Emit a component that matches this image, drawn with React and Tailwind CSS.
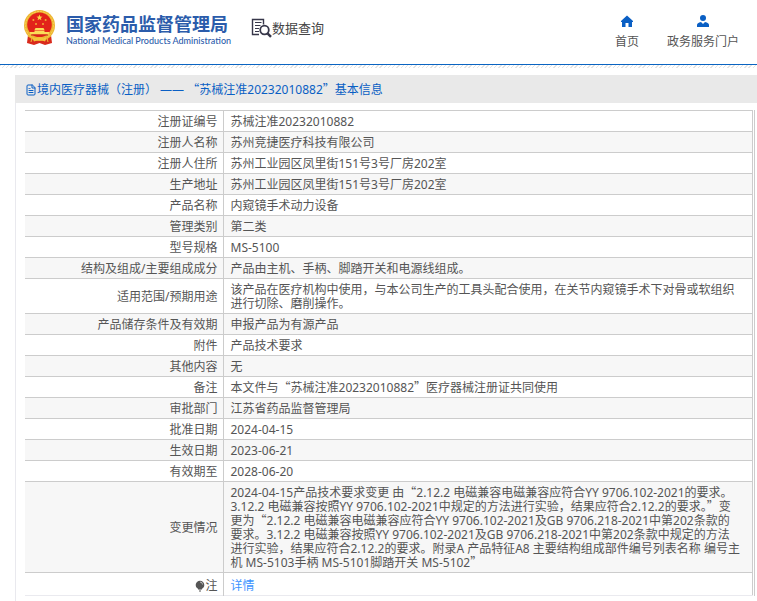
import { FiFileText } from "react-icons/fi";

const rows = [
  { label: "注册证编号", value: "苏械注准20232010882" },
  { label: "注册人名称", value: "苏州竞捷医疗科技有限公司" },
  { label: "注册人住所", value: "苏州工业园区凤里街151号3号厂房202室" },
  { label: "生产地址", value: "苏州工业园区凤里街151号3号厂房202室" },
  { label: "产品名称", value: "内窥镜手术动力设备" },
  { label: "管理类别", value: "第二类" },
  { label: "型号规格", value: "MS-5100" },
  { label: "结构及组成/主要组成成分", value: "产品由主机、手柄、脚踏开关和电源线组成。" },
  {
    label: "适用范围/预期用途",
    value:
      "该产品在医疗机构中使用，与本公司生产的工具头配合使用，在关节内窥镜手术下对骨或软组织\n进行切除、磨削操作。",
  },
  { label: "产品储存条件及有效期", value: "申报产品为有源产品" },
  { label: "附件", value: "产品技术要求" },
  { label: "其他内容", value: "无" },
  { label: "备注", value: "本文件与“苏械注准20232010882”医疗器械注册证共同使用" },
  { label: "审批部门", value: "江苏省药品监督管理局" },
  { label: "批准日期", value: "2024-04-15" },
  { label: "生效日期", value: "2023-06-21" },
  { label: "有效期至", value: "2028-06-20" },
  {
    label: "变更情况",
    value:
      "2024-04-15产品技术要求变更 由“2.12.2 电磁兼容电磁兼容应符合YY 9706.102-2021的要求。\n3.12.2 电磁兼容按照YY 9706.102-2021中规定的方法进行实验，结果应符合2.12.2的要求。”变\n更为“2.12.2 电磁兼容电磁兼容应符合YY 9706.102-2021及GB 9706.218-2021中第202条款的\n要求。3.12.2 电磁兼容按照YY 9706.102-2021及GB 9706.218-2021中第202条款中规定的方法\n进行实验，结果应符合2.12.2的要求。附录A 产品特征A8 主要结构组成部件编号列表名称 编号主\n机 MS-5103手柄 MS-5101脚踏开关 MS-5102”",
  },
];

// Curly quotes take the full-width glyph of the CJK face
function Zh({ children }) {
  return children.split(/([“”])/).map((part, i) =>
    part === "“" || part === "”" ? (
      <span key={i} className="font-['Noto_Sans_CJK_SC',sans-serif] leading-[10px]">
        {part}
      </span>
    ) : (
      part
    )
  );
}

function Emblem() {
  return (
    <svg viewBox="0 0 33 35" className="h-[35px] w-[33px]" aria-hidden="true">
      <path d="M5 25 L28 25 L29 33 L22 35 L16.5 33 L11 35 L4 33 Z" fill="#d92a1c" />
      <circle cx="16.5" cy="15.5" r="15.5" fill="#edb532" />
      <circle cx="16.5" cy="15.5" r="14" fill="none" stroke="#f8d458" strokeDasharray="2 1" />
      <circle cx="16.5" cy="14.8" r="12.3" fill="#e2231a" />
      <path d="M16.5 4.6 l.8 2 2.2.1 -1.7 1.4 .6 2.1 -1.9-1.2 -1.9 1.2 .6-2.1 -1.7-1.4 2.2-.1z" fill="#f9d648" />
      <g fill="#f2ab35">
        <circle cx="10.4" cy="10" r="1" />
        <circle cx="22.6" cy="10" r="1" />
        <circle cx="13" cy="14" r="1" />
        <circle cx="20" cy="14" r="1" />
      </g>
      <path d="M12.5 18 h8 l1 2 h-10z M11.5 20.5 h10 v1.5 h-10z M6.5 22 h20 l-1 2.6 h-18z" fill="#fbdc58" />
      <path d="M8 25 h17" stroke="#c9251b" />
      <path d="M10 29.5 q6.5-4.5 13 0 l-1 2 q-5.5-3-11 0z" fill="#f4c43b" />
      <path d="M5 26 l4 2 -1 4 M28 26 l-4 2 1 4" stroke="#f0b632" fill="none" />
    </svg>
  );
}

function SearchDocIcon() {
  return (
    <svg viewBox="0 0 21 20" className="h-5 w-[21px]" fill="none" stroke="#37374a" aria-hidden="true">
      <path d="M12.5 6.5V1.5H1.5V16.5H8" strokeWidth="1.4" />
      <path d="M4 4.5h6.5M4 7.5h5.5M4 10.5h4M4 13.5h4" strokeWidth="1" />
      <circle cx="13.5" cy="12" r="4.3" strokeWidth="1.8" />
      <path d="M16.5 15.3l3.5 3.5" strokeWidth="2.4" />
    </svg>
  );
}

function HomeIcon() {
  return (
    <svg viewBox="0 0 12 12" className="h-3 w-3" fill="#0a5fc4" aria-hidden="true">
      <path d="M6 0.5 L0 6 V7 H1 V12 H4.5 V8 H7.5 V12 H11 V7 H12 V6 Z" />
    </svg>
  );
}

function UserIcon() {
  return (
    <svg viewBox="0 0 12 12" className="h-3 w-3" fill="#0a5fc4" aria-hidden="true">
      <circle cx="6" cy="3" r="3" />
      <path d="M0 12 V10 Q0 8 4 7 L6 9 L8 7 Q12 8 12 10 V12 Z" />
    </svg>
  );
}

function BulbIcon() {
  return (
    <svg viewBox="0 0 10 12" className="h-3 w-2.5" fill="#555" aria-hidden="true">
      <circle cx="5" cy="5" r="4.3" />
      <path d="M3 8h4v1.500H3zM4 10.500h2v1H4z" />
      <path d="M5 2a2.500 2.500 0 0 1 2.500 2.500" fill="none" stroke="#fff" strokeWidth=".6" />
    </svg>
  );
}

export default function App() {
  return (
    <div
      lang="zh-CN"
      className="bg-white font-['Noto_Sans','Noto_Sans_CJK_SC',sans-serif] text-xs text-[#555]"
    >
      <header className="flex h-[65px] items-start justify-between border-b border-b-[#0a64c2] pr-[18px] pl-[23px]">
        <div className="flex">
          <a href="#" className="flex items-start gap-[10px] pt-[10px]">
            <Emblem />
            <span className="flex flex-col pt-px whitespace-nowrap text-[#2b5cab]">
              <span className="font-['Noto_Sans_CJK_SC',sans-serif] text-[18px] leading-6 font-bold">
                国家药品监督管理局
              </span>
              <span className="font-['Lato',sans-serif] text-[9px] leading-3 font-medium">
                National Medical Products Administration
              </span>
            </span>
          </a>
          <a href="#" className="ml-5 flex items-center self-start pt-[18px] text-[#444]">
            <SearchDocIcon />
            <span className="text-[13px] leading-5">数据查询</span>
          </a>
        </div>
        <nav className="flex gap-7 pt-[15px] text-[#555]">
          <a href="#" className="flex flex-col items-center gap-[5px]">
            <HomeIcon />
            <span className="leading-5">首页</span>
          </a>
          <a href="#" className="flex flex-col items-center gap-[5px]">
            <UserIcon />
            <span className="leading-5">政务服务门户</span>
          </a>
        </nav>
      </header>
      <div className="h-[3px] bg-[repeating-linear-gradient(135deg,#e4e4e4_0px,#e4e4e4_1px,#fff_1px,#fff_3px)]" />

      <main className="mt-[7px] ml-[15px]">
        <h1 className="flex h-7 items-center bg-[#e9e9e9] pt-[2px] pl-[10px] text-[#0a5fc4]">
          <FiFileText className="h-3 w-3" />
          <span className="whitespace-pre">
            <Zh>境内医疗器械（注册） —— “苏械注准20232010882”基本信息</Zh>
          </span>
        </h1>
        <div className="border-l border-[#e9e9ee] pt-[7px] pr-[2px] pb-[6px] pl-[9px]">
          <div className="border-r border-[#ccc] pr-px">
            <table className="w-full border-collapse border-t border-r border-[#ccc]">
              <tbody>
                {rows.map((row) => (
                  <tr key={row.label} className="border-b border-[#ccc] even:bg-[#f7f7f7]">
                    <th
                      scope="row"
                      className="w-[198px] border-r border-[#ccc] pt-1 pr-[5px] pb-[2px] text-right leading-[14px] font-normal"
                    >
                      {row.label}
                    </th>
                    <td className="pt-1 pr-1 pb-[2px] pl-[7px] leading-[14px] whitespace-pre-line">
                      <Zh>{row.value}</Zh>
                    </td>
                  </tr>
                ))}
                <tr className="border-b border-[#eaeaef]">
                  <th
                    scope="row"
                    className="border-r border-[#ccc] pt-[6px] pr-[5px] pb-[2px] leading-[14px] font-normal"
                  >
                    <span className="flex items-center justify-end">
                      <BulbIcon />注
                    </span>
                  </th>
                  <td className="pt-[6px] pb-[2px] pl-[7px] leading-[14px]">
                    <a href="#" className="text-[#3d94ff]">
                      详情
                    </a>
                  </td>
                </tr>
              </tbody>
            </table>
          </div>
        </div>
      </main>
    </div>
  );
}
